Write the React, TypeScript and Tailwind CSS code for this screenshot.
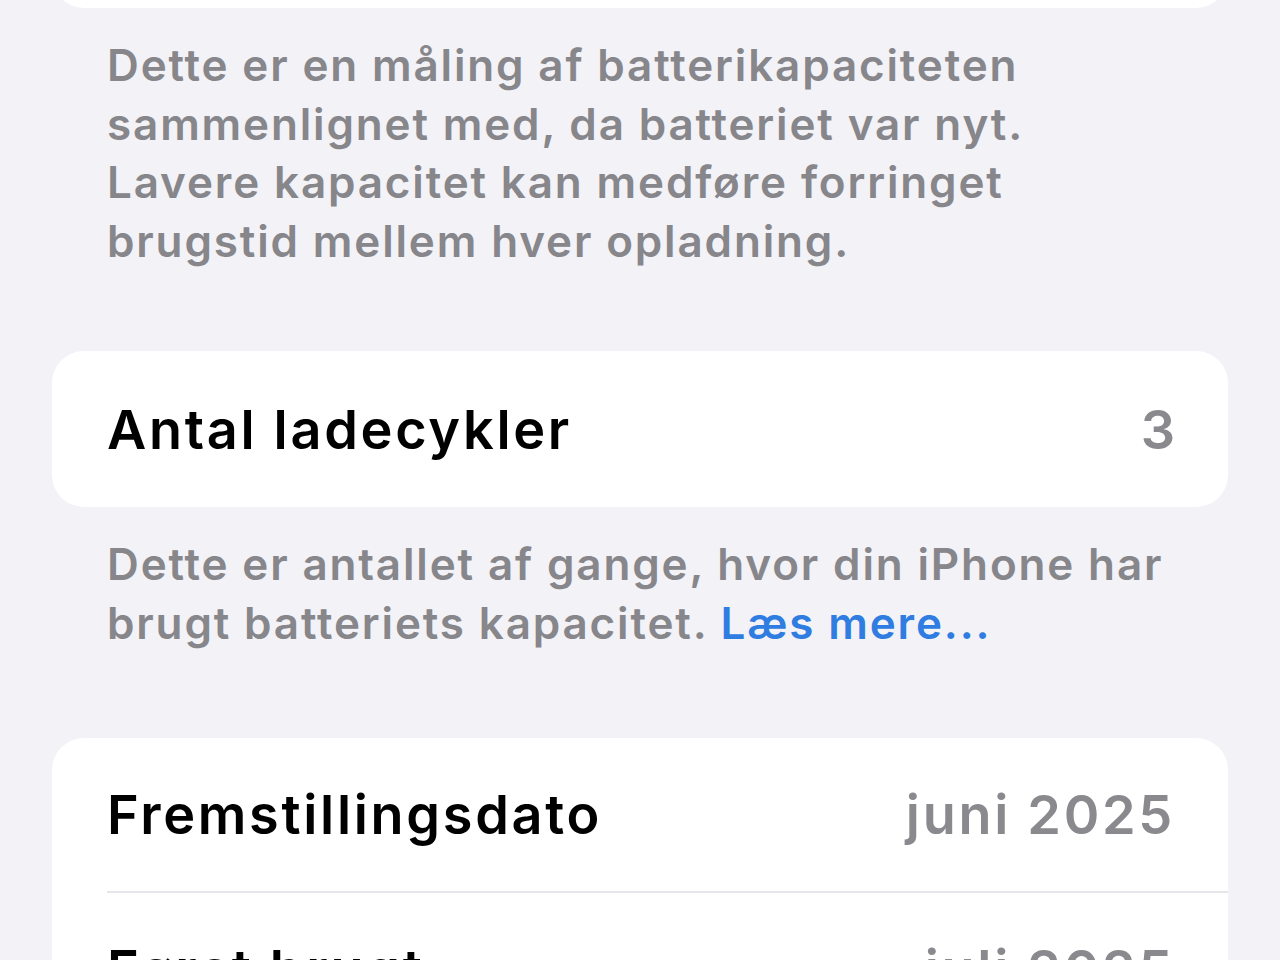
import React from "react";

type Row = {
  label: string;
  value: string;
};

const infoRows: Row[] = [
  { label: "Fremstillingsdato", value: "juni 2025" },
  { label: "Først brugt", value: "juli 2025" },
];

function ListRow({ label, value, divider }: Row & { divider?: boolean }) {
  return (
    <div className="flex flex-col">
      <div className="flex h-[153px] items-center justify-between pl-[55px] pr-[53px]">
        <span className="text-[54px] font-semibold tracking-[2.7px] text-black">{label}</span>
        <span className="text-[54px] font-semibold tracking-[2.7px] text-[#8a8a8e]">{value}</span>
      </div>
      {divider && <div className="ml-[55px] h-[2px] bg-[#e5e5ea]" />}
    </div>
  );
}

function Footnote({ children }: { children: React.ReactNode }) {
  return (
    <p className="px-[107px] text-[44px] font-semibold leading-[58.5px] tracking-[1.85px] text-[#86868b]">
      {children}
    </p>
  );
}

export default function App() {
  return (
    <div
      className="h-[960px] w-[1280px] overflow-hidden bg-[#f2f2f7]"
      style={{ fontFamily: "Inter, 'Noto Sans', sans-serif" }}
    >
      {/* bottom edge of the battery health card above */}
      <div className="mx-[52px] -mt-[142px] h-[150px] rounded-[32px] bg-white" />

      <div className="mt-[28px]">
        <Footnote>
          Dette er en måling af batterikapaciteten
          <br />
          sammenlignet med, da batteriet var nyt.
          <br />
          Lavere kapacitet kan medføre forringet
          <br />
          brugstid mellem hver opladning.
        </Footnote>
      </div>

      <div className="mx-[52px] mt-[81px] flex h-[156px] items-center justify-between rounded-[32px] bg-white pl-[55px] pr-[53px]">
        <span className="text-[54px] font-semibold tracking-[2.7px] text-black">Antal ladecykler</span>
        <span className="text-[54px] font-semibold text-[#8a8a8e]">3</span>
      </div>

      <div className="mt-[28px]">
        <Footnote>
          Dette er antallet af gange, hvor din iPhone har
          <br />
          brugt batteriets kapacitet.{" "}
          <span className="text-[#2f7de1]">Læs mere...</span>
        </Footnote>
      </div>

      <div className="mx-[52px] mt-[86px] overflow-hidden rounded-[32px] bg-white">
        {infoRows.map((row, i) => (
          <ListRow key={row.label} {...row} divider={i < infoRows.length - 1} />
        ))}
      </div>
    </div>
  );
}
